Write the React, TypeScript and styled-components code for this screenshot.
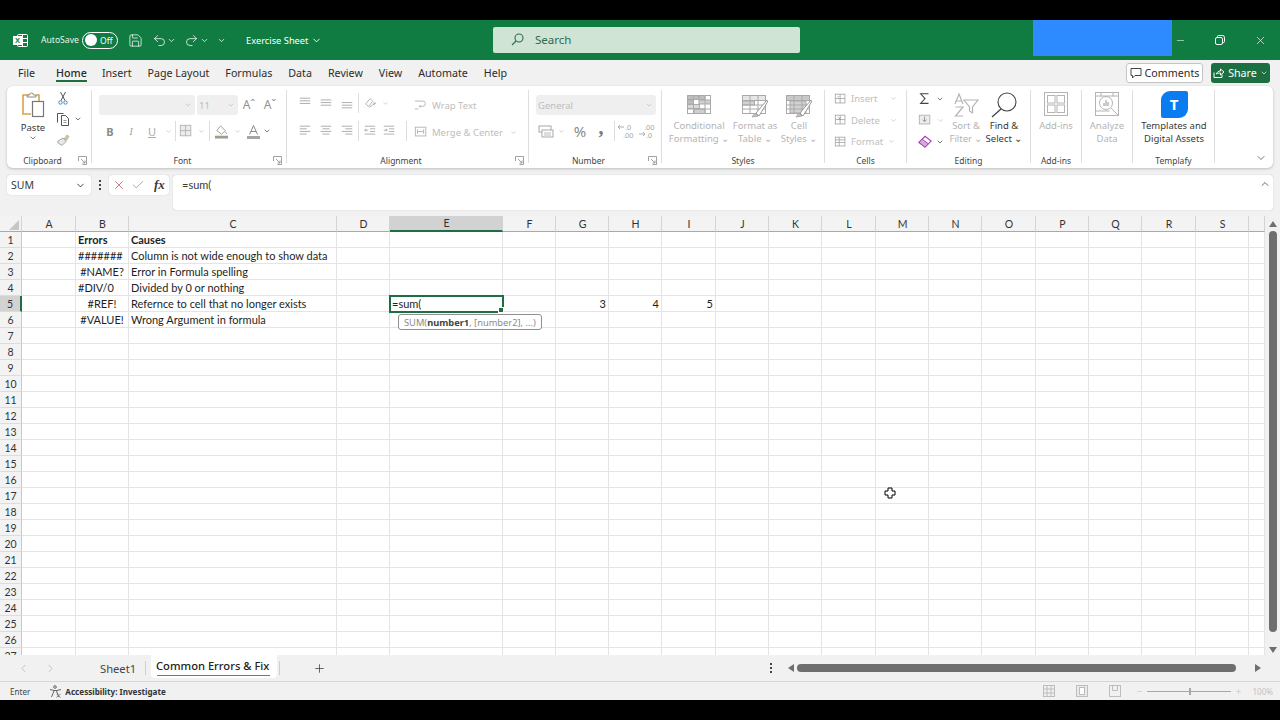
import React from "react";
import styled, { createGlobalStyle } from "styled-components";
import { ChevronDown, ChevronLeft, ChevronRight, ChevronUp, Check, Minus, Plus, Redo2, Save, Undo2, X } from "lucide-react";

const GlobalStyle = createGlobalStyle`
  html, body { margin: 0; padding: 0; background: #000; }
  * { box-sizing: border-box; }
`;

const UI_FONT = `"Noto Sans", "Open Sans", Arial, sans-serif`;
const CELL_FONT = `Lato, "Liberation Sans", Arial, sans-serif`;
const GREEN = "#107c41";
const DARK_GREEN = "#1d6f42";
const OFF = "#b4b4b4";
const INK = "#3a3a3a";

/* ---------- page ---------- */
const Page = styled.div`
  position: relative;
  width: 1280px;
  height: 720px;
  overflow: hidden;
  display: flex;
  flex-direction: column;
  background: #f1f1f1;
  font-family: ${UI_FONT};
  color: ${INK};
`;
const BlackBar = styled.div`
  height: 20px;
  flex-shrink: 0;
  background: #000;
`;

/* ---------- title bar ---------- */
const TitleBar = styled.header`
  height: 40px;
  flex-shrink: 0;
  display: grid;
  grid-template-columns: 493px 307px 233px 139px 1fr;
  background: ${GREEN};
  color: #fff;
`;
const QuickAccess = styled.div`
  display: flex;
  align-items: center;
  padding-left: 13px;
  font-size: 8.6px;
`;
const Slot = styled.span<{ $w: number; $color?: string }>`
  width: ${(p) => p.$w}px;
  flex-shrink: 0;
  display: inline-flex;
  align-items: center;
  justify-content: center;
  color: ${(p) => p.$color || "inherit"};
`;
const AutoSave = styled.span`
  margin-left: 13px;
  width: 41px;
  opacity: 0.92;
`;
const Toggle = styled.span`
  width: 36px;
  height: 17px;
  border: 1px solid #fff;
  border-radius: 9px;
  display: flex;
  align-items: center;
  padding-left: 2px;
  gap: 3px;
  font-size: 8.5px;
  &::before {
    content: "";
    width: 12px;
    height: 12px;
    border-radius: 50%;
    background: #fff;
  }
`;
const DocName = styled.span`
  margin-left: 14px;
  font-size: 9.3px;
  display: inline-flex;
  align-items: center;
  gap: 3px;
`;
const SearchBox = styled.div`
  align-self: center;
  height: 26px;
  margin-top: -1px;
  border-radius: 2px;
  background: #cfe4d5;
  color: #2f6b4c;
  display: flex;
  align-items: center;
  padding-left: 18px;
  gap: 11px;
  font-size: 11.5px;
`;
const BlueBlock = styled.div`
  grid-column: 4;
  height: 36px;
  background: #2e8bff;
`;
const WindowButtons = styled.div`
  display: flex;
  align-items: center;
  height: 40px;
`;

/* ---------- menu ---------- */
const MenuBar = styled.nav`
  height: 26px;
  flex-shrink: 0;
  display: flex;
  align-items: center;
  padding: 0 0 1px 18px;
  gap: 16px;
  font-size: 10.7px;
  color: #2c2c2c;
`;
const MenuItem = styled.span<{ $active?: boolean }>`
  position: relative;
  margin-left: ${(p) => (p.$active ? "5px" : "0")};
  margin-right: ${(p) => (p.$active ? "-1px" : "0")};
  font-weight: ${(p) => (p.$active ? 500 : 400)};
  ${(p) =>
    p.$active &&
    `&::after { content: ""; position: absolute; left: 0; right: 0; bottom: -2px; height: 1.5px; background: ${DARK_GREEN}; }`}
`;
const MenuActions = styled.div`
  margin-left: auto;
  margin-right: 10px;
  display: flex;
  gap: 8px;
`;
const CommentsBtn = styled.span`
  width: 77px;
  height: 20px;
  border: 1px solid #c4c4c4;
  border-radius: 3px;
  background: #fff;
  display: flex;
  align-items: center;
  justify-content: center;
  gap: 3px;
`;
const ShareBtn = styled.span`
  width: 59px;
  height: 20px;
  border-radius: 3px;
  background: ${DARK_GREEN};
  color: #fff;
  display: flex;
  align-items: center;
  justify-content: center;
  gap: 3px;
`;

/* ---------- ribbon ---------- */
const Ribbon = styled.div`
  height: 82px;
  flex-shrink: 0;
  margin: 0 7px;
  display: flex;
  border-radius: 6px;
  background: #fff;
  box-shadow: 0 1px 3px rgba(0, 0, 0, 0.22);
  font-size: 9.5px;
`;
const Group = styled.section<{ $w: number }>`
  width: ${(p) => p.$w}px;
  flex-shrink: 0;
  margin: 4px 0 5px;
  display: flex;
  flex-direction: column;
  border-right: 1px solid #dedede;
`;
const GroupBody = styled.div<{ $pad?: number; $top?: number }>`
  flex: 1;
  min-height: 0;
  display: flex;
  padding-left: ${(p) => p.$pad || 0}px;
  padding-top: ${(p) => p.$top || 0}px;
`;
const GroupLabel = styled.div`
  height: 10px;
  margin-bottom: -2px;
  display: flex;
  align-items: center;
  font-size: 8.5px;
  color: #444;
`;
const LabelText = styled.span`
  flex: 1;
  text-align: center;
`;
const Launcher = styled.span`
  width: 13px;
  display: flex;
  color: #8a8a8a;
`;
const Stack = styled.div<{ $gap?: number; $mt?: number; $ml?: number }>`
  display: flex;
  flex-direction: column;
  gap: ${(p) => p.$gap || 0}px;
  margin-top: ${(p) => p.$mt || 0}px;
  margin-left: ${(p) => p.$ml || 0}px;
`;
const ToolRow = styled.div<{ $h?: number }>`
  height: ${(p) => p.$h || 20}px;
  display: flex;
  align-items: center;
  color: ${OFF};
`;
const Select = styled.span<{ $w: number }>`
  width: ${(p) => p.$w}px;
  height: 20px;
  flex-shrink: 0;
  border-radius: 3px;
  background: #efefef;
  display: flex;
  align-items: center;
  justify-content: space-between;
  padding: 0 3px 0 2px;
  color: #bdbdbd;
  font-size: 9.5px;
`;
const Sep = styled.span<{ $mx?: number }>`
  width: 1px;
  height: 20px;
  flex-shrink: 0;
  margin: 0 ${(p) => p.$mx || 0}px;
  background: #dedede;
`;
const Letter = styled.span<{ $w: number; $kind: "b" | "i" | "u" }>`
  width: ${(p) => p.$w}px;
  flex-shrink: 0;
  text-align: center;
  font-size: 11px;
  color: ${(p) => (p.$kind === "b" ? "#8c8c8c" : "#aaa")};
  font-family: ${(p) => (p.$kind === "i" ? `"Liberation Serif", serif` : UI_FONT)};
  font-weight: ${(p) => (p.$kind === "b" ? 700 : 400)};
  font-style: ${(p) => (p.$kind === "i" ? "italic" : "normal")};
  text-decoration: ${(p) => (p.$kind === "u" ? "underline" : "none")};
`;
const GrowLetter = styled.span`
  font-size: 12px;
  line-height: 1;
  color: #8f8f8f;
`;
const Percent = styled.span`
  font-size: 15px;
  color: #8a8a8a;
`;
const Comma = styled.span`
  font-family: "Liberation Serif", serif;
  font-size: 20px;
  font-weight: 700;
  line-height: 10px;
  margin-top: -9px;
  color: #777;
`;
const Large = styled.div<{ $w: number; $off?: boolean }>`
  width: ${(p) => p.$w}px;
  flex-shrink: 0;
  display: flex;
  flex-direction: column;
  align-items: center;
  line-height: 13px;
  white-space: nowrap;
  color: ${(p) => (p.$off ? OFF : INK)};
`;
const LargeIcon = styled.div<{ $top?: number }>`
  height: 29px;
  padding-top: ${(p) => (p.$top === undefined ? 2 : p.$top)}px;
  display: flex;
  align-items: flex-start;
  justify-content: center;
`;
const PasteLabel = styled.span`
  margin-top: 2px;
`;
const TextTool = styled.span`
  color: #bdbdbd;
  font-size: 9.5px;
  white-space: nowrap;
`;
const TemplafyMark = styled.div`
  width: 27px;
  height: 27px;
  margin-top: -1px;
  border-radius: 9px 2px 9px 2px;
  background: #0a7cf0;
  color: #fff;
  display: flex;
  align-items: center;
  justify-content: center;
  font-weight: 700;
  font-size: 15px;
`;
const Collapse = styled.span`
  margin-left: auto;
  margin-right: 6px;
  align-self: flex-end;
  margin-bottom: 4px;
  color: #444;
  display: flex;
`;

/* ---------- formula bar ---------- */
const FormulaBar = styled.div`
  height: 35px;
  flex-shrink: 0;
  margin: 7px 7px 0;
  display: flex;
  align-items: flex-start;
  font-size: 10px;
`;
const NameBox = styled.div`
  width: 84px;
  height: 20px;
  background: #fff;
  border-radius: 3px;
  display: flex;
  align-items: center;
  justify-content: space-between;
  padding: 0 5px 0 4px;
  box-shadow: 0 0 1px rgba(0, 0, 0, 0.3);
  font-size: 10.5px;
`;
const Dots = styled.div`
  width: 18px;
  height: 20px;
  display: flex;
  align-items: center;
  justify-content: center;
  &::before {
    content: "";
    width: 2px;
    height: 2px;
    background: #444;
    box-shadow: 0 -4px 0 #444, 0 4px 0 #444;
  }
`;
const FxBox = styled.div`
  width: 60px;
  height: 20px;
  background: #fff;
  border-radius: 3px;
  display: flex;
  align-items: center;
  box-shadow: 0 0 1px rgba(0, 0, 0, 0.3);
`;
const Fx = styled.span`
  font-family: "Liberation Serif", serif;
  font-style: italic;
  font-weight: 700;
  font-size: 13px;
  margin-left: 7px;
`;
const FormulaInput = styled.div`
  margin-left: 4px;
  flex: 1;
  height: 35px;
  background: #fff;
  border-radius: 3px;
  box-shadow: 0 0 1px rgba(0, 0, 0, 0.3);
  display: flex;
  justify-content: space-between;
  padding: 3px 2px 0 9px;
  font-family: ${CELL_FONT};
  font-size: 11px;
`;

/* ---------- sheet ---------- */
const COLS = [
  ["A", 54], ["B", 53], ["C", 208], ["D", 53], ["E", 113], ["F", 53], ["G", 53], ["H", 53], ["I", 54], ["J", 53],
  ["K", 53], ["L", 54], ["M", 53], ["N", 53], ["O", 54], ["P", 53], ["Q", 53], ["R", 54], ["S", 53],
] as [string, number][];
const TEMPLATE = `22px ${COLS.map((c) => c[1] + "px").join(" ")} 16px`;

const Sheet = styled.div`
  height: 439px;
  margin-top: 6px;
  flex-shrink: 0;
  display: flex;
`;
const GridPane = styled.div`
  width: 1265px;
  overflow: hidden;
  background: #fff;
  font-family: ${CELL_FONT};
  font-size: 11px;
  color: #1e1e1e;
`;
const RowLine = styled.div<{ $h?: number }>`
  display: grid;
  grid-template-columns: ${TEMPLATE};
  height: ${(p) => p.$h || 16}px;
`;
const ColHead = styled.div<{ $on?: boolean }>`
  display: flex;
  align-items: center;
  justify-content: center;
  padding-left: 1px;
  background: ${(p) => (p.$on ? "#d2d2d2" : "#f3f3f3")};
  border-right: 1px solid ${(p) => (p.$on ? "#d2d2d2" : "#d4d4d4")};
  border-bottom: ${(p) => (p.$on ? `2px solid ${DARK_GREEN}` : "1px solid #a9a9a9")};
  color: #333;
  font-size: 10.5px;
`;
const Corner = styled(ColHead)`
  align-items: flex-end;
  justify-content: flex-end;
  padding: 0 2px 1px 0;
`;
const Triangle = styled.span`
  width: 0;
  height: 0;
  border-left: 10px solid transparent;
  border-bottom: 10px solid #c6c6c6;
`;
const RowHead = styled.div<{ $on?: boolean }>`
  display: flex;
  align-items: center;
  justify-content: center;
  background: ${(p) => (p.$on ? "#d2d2d2" : "#f3f3f3")};
  border-right: ${(p) => (p.$on ? `2px solid ${DARK_GREEN}` : "1px solid #c9c9c9")};
  border-bottom: 1px solid #dcdcdc;
  color: #333;
  font-size: 10.5px;
`;
const Cell = styled.div<{ $align?: string; $bold?: boolean; $active?: boolean }>`
  position: relative;
  display: flex;
  align-items: center;
  justify-content: ${(p) => p.$align || "flex-start"};
  padding: 0 2px;
  white-space: nowrap;
  border-right: 1px solid #e4e4e4;
  border-bottom: 1px solid #e4e4e4;
  font-weight: ${(p) => (p.$bold ? 700 : 400)};
  ${(p) =>
    p.$active &&
    `outline: 2px solid ${DARK_GREEN}; outline-offset: -1px; z-index: 2;
     &::after { content: ""; position: absolute; right: -2px; bottom: -2px; width: 4px; height: 4px; background: ${DARK_GREEN}; border: 1px solid #fff; }`}
`;
const Tip = styled.div`
  position: absolute;
  z-index: 3;
  left: 8px;
  top: 2px;
  width: 144px;
  height: 16px;
  display: flex;
  align-items: center;
  padding-left: 5px;
  border: 1px solid #8f8f8f;
  border-radius: 3px;
  background: #fff;
  color: #8a8a8a;
  font-size: 9.3px;
  font-family: ${UI_FONT};
  b { color: #444; }
`;
const VScroll = styled.div`
  width: 15px;
  display: flex;
  flex-direction: column;
  align-items: center;
  background: #f1f1f1;
  padding-top: 5px;
`;
const VThumb = styled.div`
  width: 8px;
  height: 401px;
  margin-top: 4px;
  border-radius: 4px;
  background: #6e6e6e;
`;
const Arrow = styled.span<{ $dir: "up" | "down" | "left" | "right"; $m?: string }>`
  width: 0;
  height: 0;
  margin: ${(p) => p.$m || 0};
  flex-shrink: 0;
  ${(p) =>
    p.$dir === "up"
      ? "border: 4px solid transparent; border-top: 0; border-left-width: 4.5px; border-right-width: 4.5px; border-bottom: 6px solid #6e6e6e;"
      : p.$dir === "down"
      ? "border: 4px solid transparent; border-bottom: 0; border-left-width: 4.5px; border-right-width: 4.5px; border-top: 6px solid #6e6e6e;"
      : p.$dir === "left"
      ? "border: 4.5px solid transparent; border-left: 0; border-right: 6px solid #6e6e6e;"
      : "border: 4.5px solid transparent; border-right: 0; border-left: 6px solid #6e6e6e;"}
`;

/* ---------- sheet tabs + status ---------- */
const TabsBar = styled.div`
  height: 27px;
  flex-shrink: 0;
  display: flex;
  align-items: center;
  font-size: 11.2px;
  border-bottom: 1px solid #d6d6d6;
`;
const Nav = styled.span`
  width: 27px;
  display: flex;
  justify-content: center;
  color: #b0b0b0;
`;
const SheetTab = styled.span`
  margin-left: 36px;
  width: 45px;
  color: #444;
`;
const TabEdge = styled.span`
  width: 1px;
  height: 14px;
  background: #cfcfcf;
`;
const ActiveTab = styled.span`
  position: relative;
  width: 126px;
  height: 23px;
  margin: -3px 2px 0 5px;
  background: #fff;
  border-radius: 0 0 4px 4px;
  font-weight: 500;
  color: #222;
  display: flex;
  align-items: center;
  padding: 0 0 3px 5px;
  white-space: nowrap;
  &::after {
    content: "";
    position: absolute;
    left: 6px;
    right: 7px;
    bottom: 2px;
    height: 1.5px;
    background: #4f8a76;
  }
`;
const AddSheet = styled.span`
  margin-left: 33px;
  display: flex;
  color: #444;
`;
const HScrollArea = styled.div`
  margin-left: auto;
  display: flex;
  align-items: center;
  padding-right: 19px;
`;
const HThumb = styled.span`
  width: 439px;
  height: 8px;
  margin: 0 19px 0 3px;
  border-radius: 4px;
  background: #6e6e6e;
`;
const StatusBar = styled.footer`
  height: 18px;
  flex-shrink: 0;
  display: flex;
  align-items: center;
  padding-left: 10px;
  font-size: 8.1px;
  color: #444;
`;
const StatusBold = styled.span`
  font-weight: 700;
  color: #333;
  margin-left: 3px;
`;
const Zoomer = styled.div`
  margin-left: auto;
  display: flex;
  align-items: center;
  color: #c2c2c2;
`;
const Slider = styled.span`
  position: relative;
  width: 84px;
  height: 1px;
  margin: 0 3px;
  background: #a8a8a8;
  &::after {
    content: "";
    position: absolute;
    left: 42px;
    top: -3px;
    width: 2px;
    height: 7px;
    background: #a8a8a8;
  }
`;
const ZoomValue = styled.span`
  margin: 0 7px 0 10px;
  color: #c2c2c2;
`;
const Pointer = styled.svg`
  position: absolute;
  left: 884px;
  top: 487px;
`;

/* ---------- drawings ---------- */
type S = { size?: number; children?: React.ReactNode };
const Svg = ({ size = 16, children }: S) => (
  <svg width={size} height={size} viewBox="0 0 16 16" fill="none" stroke="currentColor" strokeWidth="1">
    {children}
  </svg>
);
const Chev = ({ size = 8, color }: { size?: number; color?: string }) => (
  <ChevronDown size={size} strokeWidth={2} color={color || "currentColor"} />
);

const ExcelLogo = () => (
  <svg width="15" height="15" viewBox="0 0 15 15" fill="none" stroke="#fff">
    <rect x="4.5" y="1.5" width="10" height="12" rx="1" />
    <path d="M9.5 1.5v12M9.5 5.5h5M9.5 9.5h5" />
    <rect x="0.5" y="3.5" width="8" height="8" fill="#fff" />
    <text x="4.5" y="10" textAnchor="middle" fontSize="7.5" fontWeight="700" fill={GREEN} stroke="none" fontFamily="Liberation Sans">X</text>
  </svg>
);
const PasteIcon = () => (
  <svg width="24" height="26" viewBox="0 0 24 26" fill="none">
    <path d="M9 3H2v19h8" stroke="#d9a24c" strokeWidth="1.6" />
    <path d="M15 3h3v6" stroke="#d9a24c" strokeWidth="1.6" />
    <path d="M6 5V3h2.5a2 2 0 0 1 4 0H15v2z" stroke="#8a8a8a" fill="#fff" />
    <rect x="11.5" y="9.5" width="11" height="15" stroke="#777" fill="#fff" strokeWidth="1.2" />
  </svg>
);
const ScissorsIcon = () => (
  <svg width="10" height="14" viewBox="0 0 10 14" fill="none" stroke="#555">
    <path d="M2.5 1l4.5 8.5M7.5 1L3 9.5" />
    <circle cx="2.5" cy="11.5" r="1.7" stroke="#3d86c6" />
    <circle cx="7.5" cy="11.5" r="1.7" stroke="#3d86c6" />
  </svg>
);
const CopyIcon = () => (
  <svg width="14" height="14" viewBox="0 0 14 14" fill="none" stroke="#555">
    <path d="M1.5 10.5v-9h6" />
    <path d="M5.5 3.5h4l3 3v7h-7z" fill="#fff" />
    <path d="M7.5 8.5h3M7.5 10.5h3" stroke="#999" />
  </svg>
);
const BrushIcon = () => (
  <svg width="14" height="14" viewBox="0 0 14 14" fill="none" stroke="#a5a5a5">
    <path d="M8 6l3-4 2 1.5-2.5 4z" fill="#d9c48f" stroke="#bbb" />
    <path d="M2 8l5-3 3 3.5-4 4-4.5-3z" fill="#e8e8e8" />
  </svg>
);
const Launch = () => (
  <svg width="9" height="9" viewBox="0 0 9 9" fill="none" stroke="currentColor" strokeWidth="0.8">
    <path d="M0.5 5V0.5H8.5V8.5H4.5M3 3l4 4M7 4.5V7H4.5" />
  </svg>
);
const Lines = ({ rows }: { rows: [number, number, number][] }) => (
  <Svg size={14}>
    <g stroke="#a2a2a2">
      {rows.map(([y, a, b], i) => (
        <path key={i} d={`M${a} ${y}H${b}`} />
      ))}
    </g>
  </Svg>
);
const L_TOP: [number, number, number][] = [[2.5, 2, 14], [5.5, 2, 14], [8.5, 2, 14]];
const L_MID: [number, number, number][] = [[4.5, 2, 14], [7.5, 2, 14], [10.5, 2, 14]];
const L_BOT: [number, number, number][] = [[7.5, 2, 14], [10.5, 2, 14], [13.5, 2, 14]];
const A_LEFT: [number, number, number][] = [[2.5, 2, 14], [5.5, 2, 10], [8.5, 2, 14], [11.5, 2, 10]];
const A_CEN: [number, number, number][] = [[2.5, 2, 14], [5.5, 4, 12], [8.5, 2, 14], [11.5, 4, 12]];
const A_RIGHT: [number, number, number][] = [[2.5, 2, 14], [5.5, 6, 14], [8.5, 2, 14], [11.5, 6, 14]];
const OrientIcon = () => (
  <Svg size={14}>
    <path d="M2 9l5-6 3 3-5 6z" stroke="#a8a8a8" />
    <path d="M6 13l7-5M13 8l-2.5.2M13 8l-1 2" stroke="#a8a8a8" />
  </Svg>
);
const IndentIcon = ({ out }: { out?: boolean }) => (
  <Svg size={14}>
    <path d="M2 2.5h12M8 5.5h6M8 8.5h6M2 11.5h12" stroke="#a8a8a8" />
    <path d={out ? "M6 7H2M3.5 5.5L2 7l1.5 1.5" : "M2 7h4M4.5 5.5L6 7 4.5 8.5"} stroke="#8fa8bf" />
  </Svg>
);
const BorderIcon = () => (
  <Svg size={14}>
    <rect x="1.5" y="1.5" width="12" height="12" stroke="#b0b0b0" fill="#ececec" />
    <path d="M7.5 1.5v12M1.5 7.5h12" stroke="#b0b0b0" />
  </Svg>
);
const FillIcon = () => (
  <Svg size={15}>
    <path d="M7 2l5 5-4 4-5-4z" stroke="#9d9d9d" />
    <path d="M12 8l1.5 2.5" stroke="#9d9d9d" />
    <rect x="1" y="12.5" width="14" height="3" fill="#9e9e90" stroke="none" />
  </Svg>
);
const FontColorIcon = () => (
  <svg width="15" height="15" viewBox="0 0 15 15" fill="none">
    <path d="M3.5 10.5L7.5 1.5l4 9M5 7.5h5" stroke="#8a8a8a" />
    <rect x="1" y="12" width="13" height="3" fill="#a5a5a5" />
  </svg>
);
const WrapIcon = () => (
  <Svg size={14}>
    <path d="M1 3.5h9a3 3 0 0 1 0 6H6M7.5 8L6 9.5 7.5 11M1 12.5h4" stroke="#b0b0b0" />
  </Svg>
);
const MergeIcon = () => (
  <Svg size={14}>
    <rect x="1.5" y="2.5" width="12" height="10" stroke="#b0b0b0" />
    <path d="M4 7.5h7M4 5v5M11 5v5" stroke="#b0b0b0" />
  </Svg>
);
const MoneyIcon = () => (
  <Svg size={16}>
    <rect x="1" y="3" width="12" height="6" stroke="#a8a8a8" />
    <rect x="4" y="7" width="11" height="7" fill="#fff" stroke="#a8a8a8" />
    <path d="M6 10h7M6 12h7" stroke="#bbb" />
  </Svg>
);
const Decimals = ({ more }: { more?: boolean }) => (
  <svg width="18" height="16" viewBox="0 0 18 16" fill="none" fontFamily="Liberation Sans" fontSize="7.5">
    <text x={more ? 6 : 8} y="7" fill="#a5a5a5">{more ? ".00" : ".0"}</text>
    <text x={more ? 8 : 6} y="14.5" fill="#a5a5a5">{more ? ".0" : ".00"}</text>
    <path d={more ? "M1 11h6M5 9l2 2-2 2" : "M7 4H1M3 2L1 4l2 2"} stroke="#9fb0bf" />
  </svg>
);
const CondIcon = () => (
  <svg width="24" height="19" viewBox="0 0 24 19" fill="#cfcfcf" stroke="#aaa">
    <rect x="0.5" y="0.5" width="23" height="18" fill="#fff" />
    <rect x="0.5" y="0.5" width="11" height="4" fill="#bdbdbd" />
    <rect x="12" y="0.5" width="6" height="4" fill="#bdbdbd" />
    <rect x="0.5" y="5" width="6" height="4" fill="#bdbdbd" />
    <rect x="12" y="5" width="11.5" height="4" fill="#cfcfcf" />
    <rect x="0.5" y="9.5" width="12" height="4" fill="#d9d9d9" />
    <rect x="7" y="14" width="11" height="4.5" fill="#cfcfcf" />
    <path d="M0.5 14h23M18 .5v18M6.5 .5v18" fill="none" />
  </svg>
);
const TableBrushIcon = ({ filled }: { filled?: boolean }) => (
  <svg width="26" height="23" viewBox="0 0 26 23" fill="none" stroke="#aaa">
    <rect x="0.5" y="0.5" width="23" height="18" fill="#fff" />
    <rect x="0.5" y="0.5" width="23" height="5" fill={filled ? "#c9c9c9" : "#e6e6e6"} />
    {filled ? <rect x="4" y="6" width="16" height="12" fill="#d2d2d2" /> : <rect x="0.5" y="6" width="12" height="4" fill="#d2d2d2" />}
    <path d="M8 .5v18M16 .5v18M.5 10h23M.5 14h23" />
    <path d="M25 5L14 18l3 3L25.5 7z" fill="#fff" stroke="#999" />
    <path d="M13 18l-3 4 6-1z" fill="#c2c2c2" stroke="#aaa" />
  </svg>
);
const GridSmall = ({ kind }: { kind: 0 | 1 | 2 }) => (
  <Svg size={14}>
    <rect x="1.5" y="2.5" width="11" height="10" stroke="#a8a8a8" />
    <path d={kind === 2 ? "M1.5 5.5h11M1.5 8.5h11M6 2.5v10" : "M1.5 7.5h11M7 2.5v10"} stroke="#a8a8a8" />
    {kind === 1 && <path d="M5 5l3 3M8 5L5 8" stroke="#b58a8a" />}
    {kind === 0 && <path d="M4 5.5h2" stroke="#8fa8bf" />}
  </Svg>
);
const SigmaIcon = () => (
  <Svg size={14}>
    <path d="M12 2H3l5 5.5L3 13h9" stroke="#444" strokeWidth="1.2" />
  </Svg>
);
const FillDown = () => (
  <Svg size={14}>
    <rect x="1.5" y="2.5" width="12" height="10" stroke="#b0b0b0" fill="#eee" />
    <path d="M7.5 4v6M5 7.5l2.5 2.5L10 7.5" stroke="#8a8a8a" />
  </Svg>
);
const EraserIcon = () => (
  <Svg size={15}>
    <path d="M1 9l6.5-6.5 6.5 5-6.5 6.5z" fill="#fff" stroke="#a13eb0" strokeWidth="1.2" />
    <path d="M1 9l3.5-3.5 6.5 5L7.5 14z" fill="#d9a6e0" stroke="#a13eb0" />
  </Svg>
);
const SortIcon = () => (
  <svg width="26" height="24" viewBox="0 0 26 24" fill="none" stroke="#b4b4b4" strokeWidth="1.2">
    <path d="M2 11L6 1l4 10M3.5 8h5M2.5 14H10L2.5 23H10" />
    <path d="M11 7h14l-5.5 7v6l-3-2v-4z" />
  </svg>
);
const FindIcon = () => (
  <svg width="26" height="26" viewBox="0 0 26 26" fill="none" stroke="#444" strokeWidth="1.1">
    <circle cx="16" cy="10" r="9" />
    <path d="M10 17L1 25" strokeWidth="1.4" />
  </svg>
);
const AddinsIcon = () => (
  <svg width="24" height="24" viewBox="0 0 24 24" fill="none" stroke="#b4b4b4">
    <rect x="0.5" y="0.5" width="23" height="23" />
    <rect x="3.5" y="3.5" width="7.5" height="7.5" />
    <rect x="13" y="3.5" width="7.5" height="7.5" />
    <rect x="3.5" y="13" width="7.5" height="7.5" />
    <rect x="13" y="13" width="7.5" height="7.5" />
  </svg>
);
const AnalyzeIcon = () => (
  <svg width="24" height="24" viewBox="0 0 24 24" fill="none" stroke="#b4b4b4">
    <rect x="0.5" y="0.5" width="23" height="23" />
    <path d="M.5 4h23M.5 19h14M6 .5v4M18 .5v4" />
    <circle cx="11" cy="11" r="6.5" fill="#fff" />
    <path d="M9 14V11M11 14V8M13 14V10" strokeWidth="1.4" />
    <path d="M16 16l7 7" />
  </svg>
);
const SearchGlass = () => (
  <svg width="13" height="13" viewBox="0 0 13 13" fill="none" stroke="currentColor" strokeWidth="1.1">
    <circle cx="8" cy="5" r="4" />
    <path d="M5 8l-4 4" />
  </svg>
);
const AccessIcon = () => (
  <svg width="13" height="13" viewBox="0 0 13 13" fill="none" stroke="#555" strokeWidth="0.9">
    <circle cx="6" cy="2" r="1.3" />
    <path d="M1 4.5l4 1 3 0 4-1M5 6l-2.5 6M7.5 6L10 12" />
    <path d="M7.5 9l4 3.5M11.5 9l-4 3.5" stroke="#777" />
  </svg>
);
const RestoreIcon = () => (
  <svg width="10" height="10" viewBox="0 0 10 10" fill="none" stroke="#fff">
    <path d="M2.5 2V1.5a1 1 0 0 1 1-1h4a2 2 0 0 1 2 2v4a1 1 0 0 1-1 1H8" />
    <rect x="0.5" y="2.5" width="7" height="7" rx="1.5" />
  </svg>
);
const CommentIcon = () => (
  <svg width="12" height="12" viewBox="0 0 12 12" fill="none" stroke="#444">
    <path d="M1 1.5h10v7H5L2.5 11V8.5H1z" />
  </svg>
);
const ShareIcon = () => (
  <svg width="12" height="12" viewBox="0 0 12 12" fill="none" stroke="#fff">
    <path d="M1 5.5v5h8v-3M3.5 7c.5-2 2-3 4-3V2l3.500 3-3.500 3V6c-2 0-3 .3-4 1z" />
  </svg>
);
const ViewIcon = ({ kind }: { kind: 0 | 1 | 2 }) => (
  <svg width="12" height="12" viewBox="0 0 12 12" fill="none" stroke="#bdbdbd">
    <rect x="0.5" y="0.5" width="11" height="11" fill={kind === 1 ? "#e9e9e9" : "none"} />
    {kind === 0 && <path d="M4 .5v11M8 .5v11M.5 4h11M.5 8h11" />}
    {kind === 1 && <rect x="3.5" y="2.5" width="5" height="7" fill="#fff" />}
    {kind === 2 && <path d="M3.5 .5v5h5v-5" />}
  </svg>
);

/* ---------- data ---------- */
type CellData = { text: string; align?: string; bold?: boolean };
const DATA: Record<number, Record<string, CellData>> = {
  1: { B: { text: "Errors", bold: true }, C: { text: "Causes", bold: true } },
  2: { B: { text: "#######" }, C: { text: "Column is not wide enough to show data" } },
  3: { B: { text: "#NAME?", align: "center" }, C: { text: "Error in Formula spelling" } },
  4: { B: { text: "#DIV/0" }, C: { text: "Divided by 0 or nothing" } },
  5: {
    B: { text: "#REF!", align: "center" },
    C: { text: "Refernce to cell that no longer exists" },
    G: { text: "3", align: "flex-end" },
    H: { text: "4", align: "flex-end" },
    I: { text: "5", align: "flex-end" },
  },
  6: { B: { text: "#VALUE!", align: "center" }, C: { text: "Wrong Argument in formula" } },
};
const ROWS = Array.from({ length: 27 }, (_, i) => i + 1);
const MENU = ["Insert", "Page Layout", "Formulas", "Data", "Review", "View", "Automate", "Help"];

export default function App() {
  return (
    <Page>
      <GlobalStyle />
      <BlackBar />
      <TitleBar>
        <QuickAccess>
          <ExcelLogo />
          <AutoSave>AutoSave</AutoSave>
          <Toggle>Off</Toggle>
          <Slot $w={10} />
          <Save size={15} strokeWidth={1.2} />
          <Slot $w={9} />
          <Undo2 size={15} strokeWidth={1.2} />
          <Slot $w={9}><Chev size={9} /></Slot>
          <Slot $w={8} />
          <Redo2 size={15} strokeWidth={1.2} />
          <Slot $w={11}><Chev size={9} /></Slot>
          <Slot $w={22}><Chev size={9} /></Slot>
          <DocName>Exercise Sheet <Chev size={11} /></DocName>
        </QuickAccess>
        <SearchBox>
          <SearchGlass />
          Search
        </SearchBox>
        <BlueBlock />
        <WindowButtons>
          <Slot $w={16}><Minus size={11} strokeWidth={1.2} /></Slot>
          <Slot $w={64}><RestoreIcon /></Slot>
          <Slot $w={16}><X size={13} strokeWidth={1.2} /></Slot>
        </WindowButtons>
      </TitleBar>

      <MenuBar>
        <MenuItem>File</MenuItem>
        <MenuItem $active>Home</MenuItem>
        {MENU.map((m) => (
          <MenuItem key={m}>{m}</MenuItem>
        ))}
        <MenuActions>
          <CommentsBtn><CommentIcon /> Comments</CommentsBtn>
          <ShareBtn><ShareIcon /> Share <Chev size={8} /></ShareBtn>
        </MenuActions>
      </MenuBar>

      <Ribbon>
        <Group $w={85}>
          <GroupBody $pad={11}>
            <Large $w={30}>
              <LargeIcon><PasteIcon /></LargeIcon>
              <PasteLabel>Paste</PasteLabel>
              <Chev size={8} />
            </Large>
            <Stack $mt={-3} $ml={3}>
              <ToolRow $h={21}><Slot $w={23} $color={INK}><ScissorsIcon /></Slot></ToolRow>
              <ToolRow $h={21}><Slot $w={23}><CopyIcon /></Slot><Slot $w={8} $color={INK}><Chev size={8} /></Slot></ToolRow>
              <ToolRow $h={21}><Slot $w={23}><BrushIcon /></Slot></ToolRow>
            </Stack>
          </GroupBody>
          <GroupLabel><LabelText>Clipboard</LabelText><Launcher><Launch /></Launcher></GroupLabel>
        </Group>

        <Group $w={195}>
          <GroupBody $pad={7} $top={5}>
            <Stack $gap={6}>
              <ToolRow>
                <Select $w={96}><span /><Chev size={8} /></Select>
                <Slot $w={2} />
                <Select $w={41}>11<Chev size={8} /></Select>
                <Slot $w={22}><GrowLetter>Aˆ</GrowLetter></Slot>
                <Slot $w={20}><GrowLetter>Aˇ</GrowLetter></Slot>
              </ToolRow>
              <ToolRow>
                <Slot $w={1} />
                <Letter $w={20} $kind="b">B</Letter>
                <Letter $w={22} $kind="i">I</Letter>
                <Letter $w={20} $kind="u">U</Letter>
                <Slot $w={13}><Chev size={7} /></Slot>
                <Sep />
                <Slot $w={19}><BorderIcon /></Slot>
                <Slot $w={12}><Chev size={7} /></Slot>
                <Sep $mx={2} />
                <Slot $w={19}><FillIcon /></Slot>
                <Slot $w={12}><Chev size={7} /></Slot>
                <Slot $w={20}><FontColorIcon /></Slot>
                <Slot $w={8}><Chev size={8} color={INK} /></Slot>
              </ToolRow>
            </Stack>
          </GroupBody>
          <GroupLabel><LabelText>Font</LabelText><Launcher><Launch /></Launcher></GroupLabel>
        </Group>

        <Group $w={242}>
          <GroupBody $pad={7} $top={3}>
            <Stack $gap={8}>
              <ToolRow>
                <Slot $w={21}><Lines rows={L_TOP} /></Slot>
                <Slot $w={21}><Lines rows={L_MID} /></Slot>
                <Slot $w={21}><Lines rows={L_BOT} /></Slot>
                <Sep $mx={1} />
                <Slot $w={21}><OrientIcon /></Slot>
                <Slot $w={9}><Chev size={7} /></Slot>
              </ToolRow>
              <ToolRow>
                <Slot $w={21}><Lines rows={A_LEFT} /></Slot>
                <Slot $w={21}><Lines rows={A_CEN} /></Slot>
                <Slot $w={21}><Lines rows={A_RIGHT} /></Slot>
                <Sep $mx={1} />
                <Slot $w={19}><IndentIcon out /></Slot>
                <Slot $w={20}><IndentIcon /></Slot>
                <Sep $mx={7} />
              </ToolRow>
            </Stack>
            <Stack $gap={7} $mt={2}>
              <ToolRow>
                <Slot $w={14}><WrapIcon /></Slot><Slot $w={4} /><TextTool>Wrap Text</TextTool>
              </ToolRow>
              <ToolRow>
                <Slot $w={14}><MergeIcon /></Slot><Slot $w={4} /><TextTool>Merge &amp; Center</TextTool><Slot $w={22}><Chev size={7} /></Slot>
              </ToolRow>
            </Stack>
          </GroupBody>
          <GroupLabel><LabelText>Alignment</LabelText><Launcher><Launch /></Launcher></GroupLabel>
        </Group>

        <Group $w={133}>
          <GroupBody $pad={7} $top={5}>
            <Stack $gap={6}>
              <ToolRow><Select $w={120}>General<Chev size={8} /></Select></ToolRow>
              <ToolRow>
                <Slot $w={20}><MoneyIcon /></Slot>
                <Slot $w={10}><Chev size={7} /></Slot>
                <Slot $w={28}><Percent>%</Percent></Slot>
                <Slot $w={14}><Comma>,</Comma></Slot>
                <Slot $w={6} />
                <Sep />
                <Slot $w={22}><Decimals /></Slot>
                <Slot $w={20}><Decimals more /></Slot>
              </ToolRow>
            </Stack>
          </GroupBody>
          <GroupLabel><LabelText>Number</LabelText><Launcher><Launch /></Launcher></GroupLabel>
        </Group>

        <Group $w={163}>
          <GroupBody $pad={2}>
            <Large $w={70} $off><LargeIcon $top={5}><CondIcon /></LargeIcon><span>Conditional</span><span>Formatting ⌄</span></Large>
            <Large $w={42} $off><LargeIcon $top={5}><TableBrushIcon /></LargeIcon><span>Format as</span><span>Table ⌄</span></Large>
            <Large $w={46} $off><LargeIcon $top={5}><TableBrushIcon filled /></LargeIcon><span>Cell</span><span>Styles ⌄</span></Large>
          </GroupBody>
          <GroupLabel><LabelText>Styles</LabelText></GroupLabel>
        </Group>

        <Group $w={82}>
          <GroupBody $pad={8}>
            <Stack $mt={-2}>
              <ToolRow $h={21.5}><Slot $w={16}><GridSmall kind={0} /></Slot><Slot $w={2} /><TextTool>Insert</TextTool><Slot $w={13} /><Chev size={7} /></ToolRow>
              <ToolRow $h={21.5}><Slot $w={16}><GridSmall kind={1} /></Slot><Slot $w={2} /><TextTool>Delete</TextTool><Slot $w={10} /><Chev size={7} /></ToolRow>
              <ToolRow $h={21.5}><Slot $w={16}><GridSmall kind={2} /></Slot><Slot $w={2} /><TextTool>Format</TextTool><Slot $w={5} /><Chev size={7} /></ToolRow>
            </Stack>
          </GroupBody>
          <GroupLabel><LabelText>Cells</LabelText></GroupLabel>
        </Group>

        <Group $w={124}>
          <GroupBody $pad={9}>
            <Stack $mt={-2}>
              <ToolRow $h={21.5}><Slot $w={18}><SigmaIcon /></Slot><Slot $w={12} $color={INK}><Chev size={8} /></Slot></ToolRow>
              <ToolRow $h={21.5}><Slot $w={18}><FillDown /></Slot><Slot $w={12}><Chev size={7} /></Slot></ToolRow>
              <ToolRow $h={21.5}><Slot $w={18}><EraserIcon /></Slot><Slot $w={12} $color={INK}><Chev size={8} /></Slot></ToolRow>
            </Stack>
            <Large $w={40} $off><LargeIcon $top={3}><SortIcon /></LargeIcon><span>Sort &amp;</span><span>Filter ⌄</span></Large>
            <Large $w={36}><LargeIcon><FindIcon /></LargeIcon><span>Find &amp;</span><span>Select ⌄</span></Large>
          </GroupBody>
          <GroupLabel><LabelText>Editing</LabelText></GroupLabel>
        </Group>

        <Group $w={51}>
          <GroupBody>
            <Large $w={50} $off><LargeIcon><AddinsIcon /></LargeIcon><span>Add-ins</span></Large>
          </GroupBody>
          <GroupLabel><LabelText>Add-ins</LabelText></GroupLabel>
        </Group>

        <Group $w={51}>
          <GroupBody>
            <Large $w={50} $off><LargeIcon><AnalyzeIcon /></LargeIcon><span>Analyze</span><span>Data</span></Large>
          </GroupBody>
          <GroupLabel><LabelText /></GroupLabel>
        </Group>

        <Group $w={82}>
          <GroupBody>
            <Large $w={82}><LargeIcon><TemplafyMark>T</TemplafyMark></LargeIcon><span>Templates and</span><span>Digital Assets</span></Large>
          </GroupBody>
          <GroupLabel><LabelText>Templafy</LabelText></GroupLabel>
        </Group>
        <Collapse><ChevronDown size={12} strokeWidth={1.5} /></Collapse>
      </Ribbon>

      <FormulaBar>
        <NameBox>SUM <Chev size={11} /></NameBox>
        <Dots />
        <FxBox>
          <Slot $w={20} $color="#b5484c"><X size={14} strokeWidth={1.2} /></Slot>
          <Slot $w={18} $color="#5f9c76"><Check size={14} strokeWidth={1.2} /></Slot>
          <Fx>fx</Fx>
        </FxBox>
        <FormulaInput>
          =sum(
          <ChevronUp size={12} strokeWidth={1.5} />
        </FormulaInput>
      </FormulaBar>

      <Sheet>
        <GridPane>
          <RowLine>
            <Corner><Triangle /></Corner>
            {COLS.map(([c]) => (
              <ColHead key={c} $on={c === "E"}>{c}</ColHead>
            ))}
            <ColHead />
          </RowLine>
          {ROWS.map((r) => (
            <RowLine key={r}>
              <RowHead $on={r === 5}>{r}</RowHead>
              {COLS.map(([c]) => {
                const d = DATA[r]?.[c];
                if (r === 5 && c === "E") return <Cell key={c} $active>=sum(</Cell>;
                return (
                  <Cell key={c} $align={d?.align} $bold={d?.bold}>
                    {d?.text}
                    {r === 6 && c === "E" && (
                      <Tip>SUM(<b>number1</b>, [number2], ...)</Tip>
                    )}
                  </Cell>
                );
              })}
              <Cell />
            </RowLine>
          ))}
        </GridPane>
        <VScroll>
          <Arrow $dir="up" />
          <VThumb />
          <Arrow $dir="down" $m="15px 0 0" />
        </VScroll>
      </Sheet>

      <TabsBar>
        <Slot $w={10} />
        <Nav><ChevronLeft size={13} strokeWidth={1.3} /></Nav>
        <Nav><ChevronRight size={13} strokeWidth={1.3} /></Nav>
        <SheetTab>Sheet1</SheetTab>
        <TabEdge />
        <ActiveTab>Common Errors &amp; Fix</ActiveTab>
        <TabEdge />
        <AddSheet><Plus size={13} strokeWidth={1.5} /></AddSheet>
        <HScrollArea>
          <Dots />
          <Slot $w={8} />
          <Arrow $dir="left" />
          <HThumb />
          <Arrow $dir="right" />
        </HScrollArea>
      </TabsBar>

      <StatusBar>
        Enter
        <Slot $w={19} />
        <AccessIcon />
        <StatusBold>Accessibility: Investigate</StatusBold>
        <Zoomer>
          <Slot $w={33}><ViewIcon kind={0} /></Slot>
          <Slot $w={33}><ViewIcon kind={1} /></Slot>
          <Slot $w={33}><ViewIcon kind={2} /></Slot>
          <Slot $w={3} />
          <Slot $w={10}><Minus size={7} /></Slot>
          <Slider />
          <Slot $w={8}><Plus size={7} /></Slot>
          <ZoomValue>100%</ZoomValue>
        </Zoomer>
      </StatusBar>
      <BlackBar />

      <Pointer width="12" height="12" viewBox="0 0 12 12">
        <path d="M4 1h4v3h3v4H8v3H4V8H1V4h3z" fill="#fff" stroke="#000" />
      </Pointer>
    </Page>
  );
}
